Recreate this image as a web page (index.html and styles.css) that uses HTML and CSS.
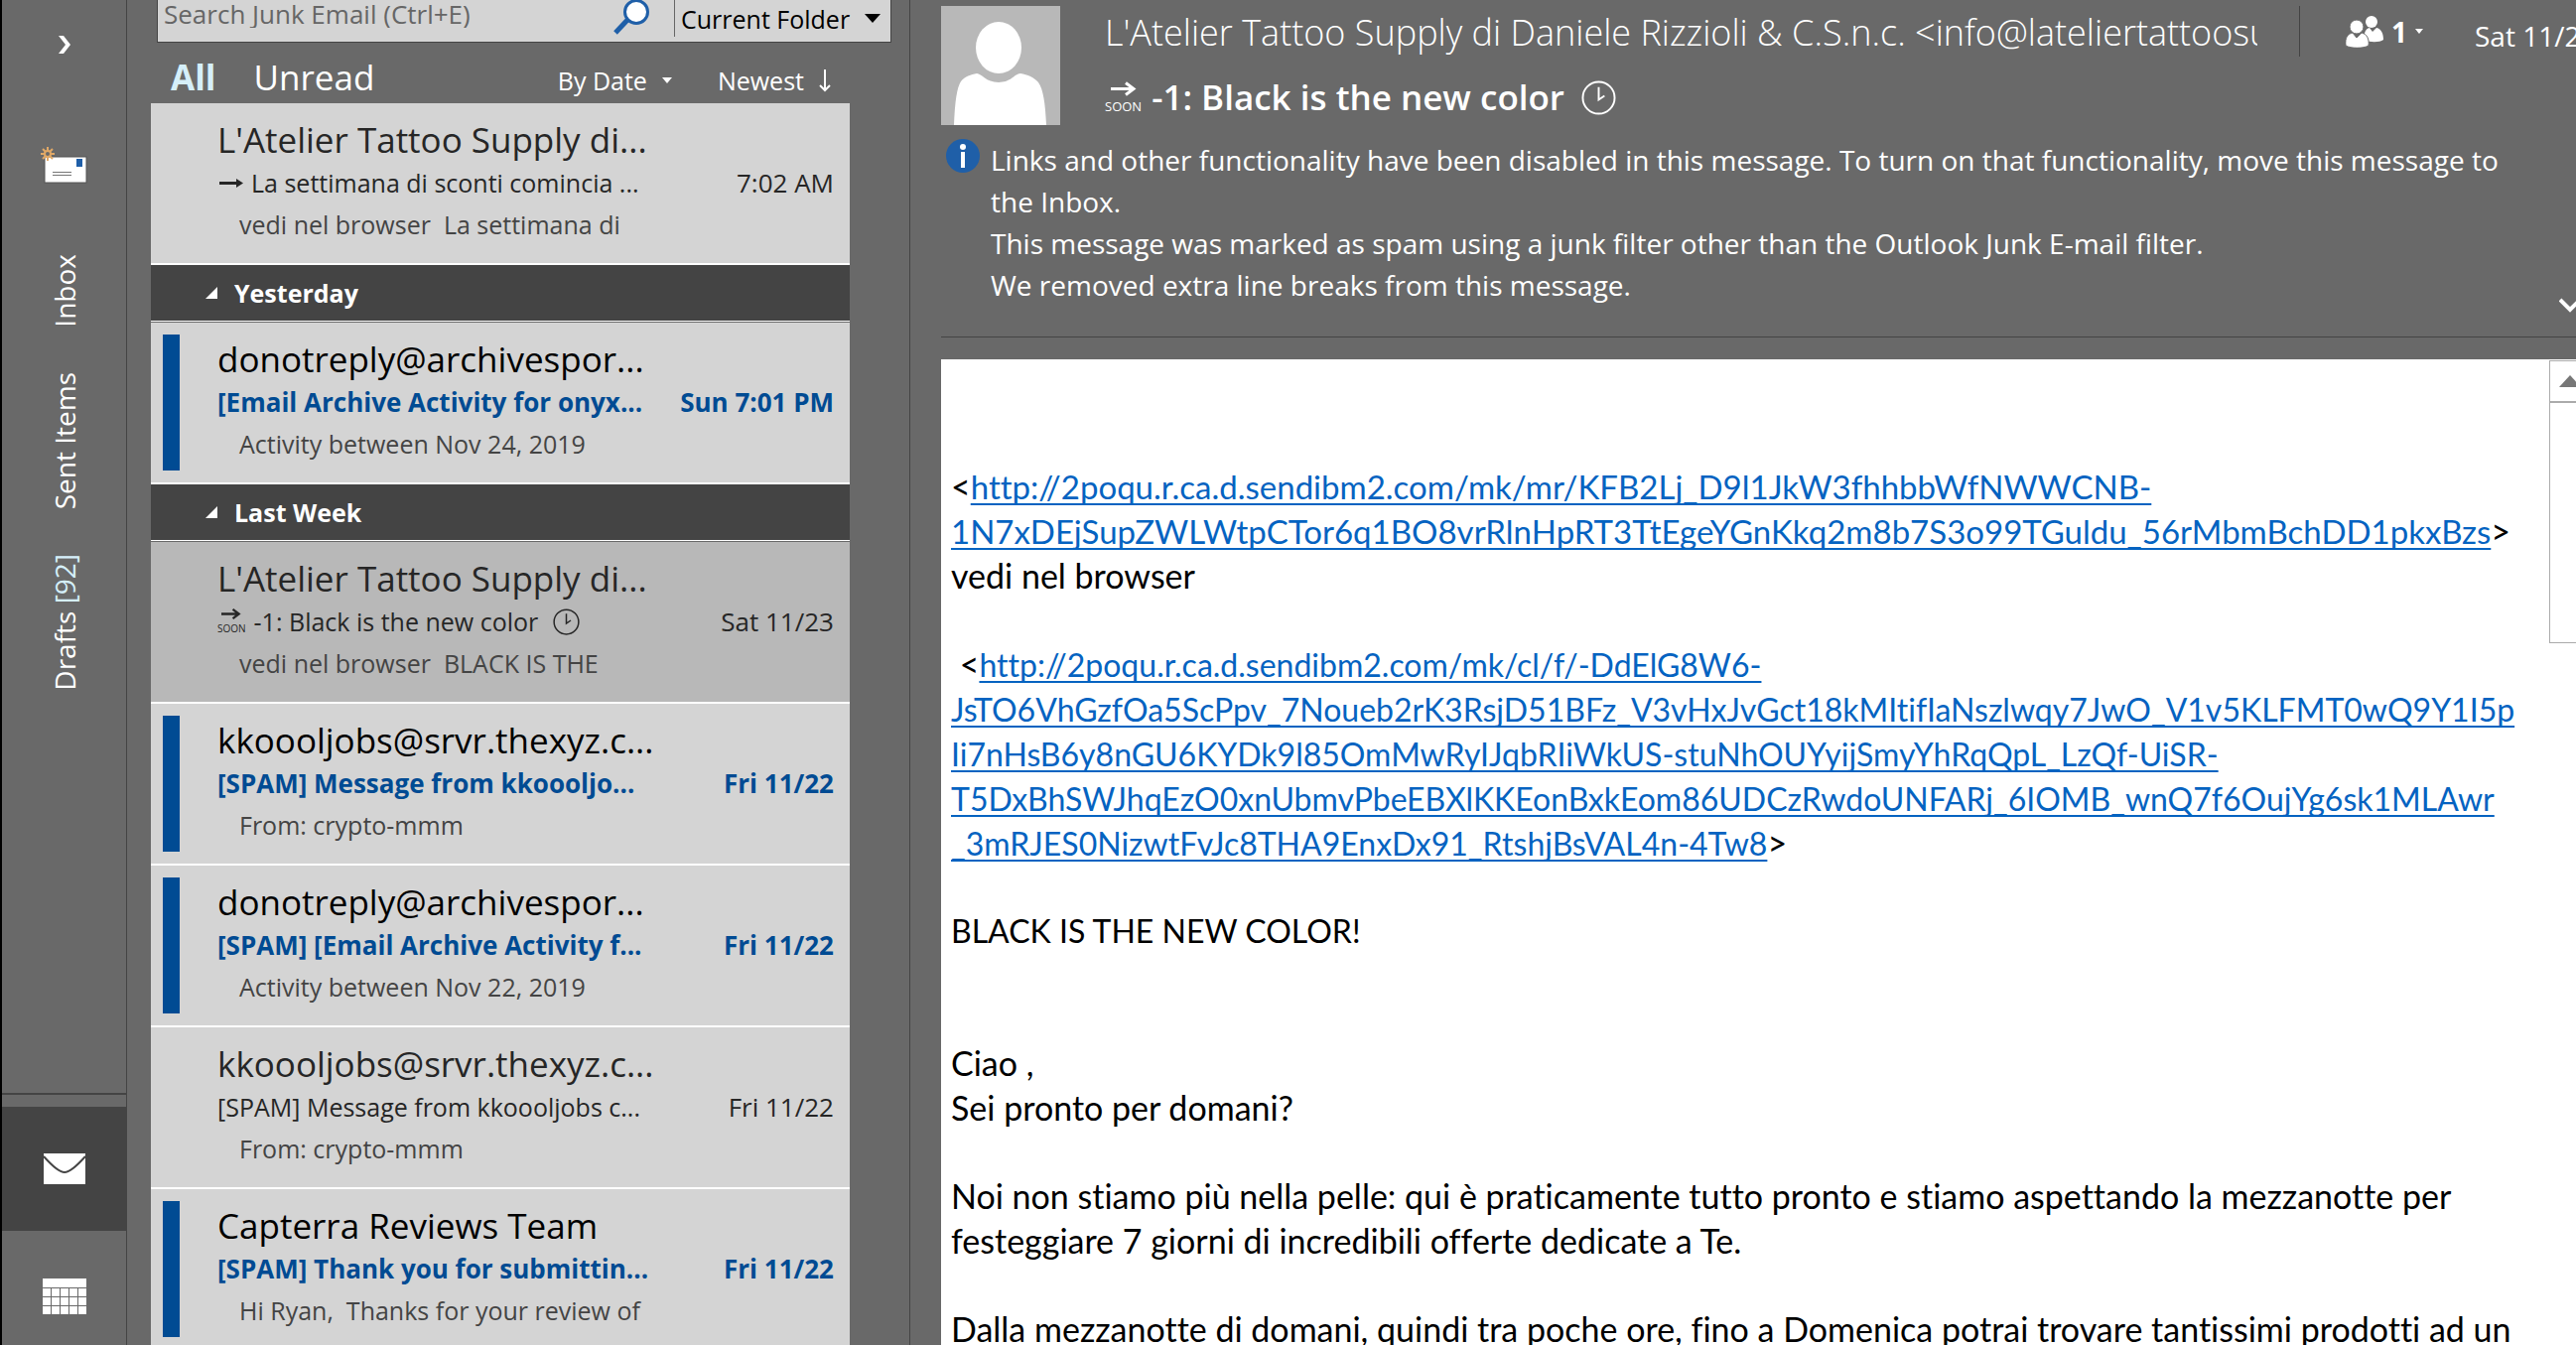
FILE: index.html
```html
<!DOCTYPE html>
<html lang="en">
<head>
<meta charset="utf-8">
<title>Junk Email - Mail</title>
<link rel="stylesheet" href="styles.css">
</head>
<body>
<svg width="0" height="0" class="defs" aria-hidden="true">
  <symbol id="clock" viewBox="0 0 36 36">
    <circle cx="18" cy="18" r="16.5" fill="none" stroke="currentColor" stroke-width="2"/>
    <path d="M18 7V20L24 16" fill="none" stroke="currentColor" stroke-width="2"/>
  </symbol>
  <symbol id="arrow" viewBox="0 0 26 14">
    <path d="M0 7H22M15 1L23 7L15 13" fill="none" stroke="currentColor" stroke-width="3"/>
  </symbol>
</svg>
<div class="app">
  <nav class="rail">
    <button class="rail-btn expand" aria-label="Expand folder pane">
      <svg width="14" height="18" viewBox="0 0 14 18"><path d="M1 0H6L13 9L6 18H1L8 9Z" fill="#fff"/></svg>
    </button>
    <button class="rail-btn compose" aria-label="New email">
      <svg width="48" height="38" viewBox="0 0 48 38">
        <rect x="4" y="11" width="42" height="26" fill="#fff" stroke="#555"/>
        <rect x="36" y="13" width="6" height="8" fill="#1f5fa8"/>
        <path d="M12 26.500H31M12 29.500H31" stroke="#777"/>
        <g stroke="#e0a866" stroke-width="2" fill="none"><circle cx="7" cy="8" r="3"/><path d="M7 1V5M7 11V15M0 8H4M10 8H14M2 3L5 6M9 10L12 13M12 3L9 6M5 10L2 13"/></g>
      </svg>
    </button>
    <div class="folders">
      <a href="#inbox">Inbox</a>
      <a href="#sent">Sent Items</a>
      <a href="#drafts">Drafts <span class="count">[92]</span></a>
    </div>
    <div class="modules">
      <button class="rail-btn mail" aria-label="Mail">
        <svg width="42" height="31" viewBox="0 0 42 31"><rect width="42" height="31" fill="#fff"/><path d="M0 3C8 12 15 19 21 19S34 12 42 3" fill="none" stroke="#444" stroke-width="2"/></svg>
      </button>
      <button class="rail-btn calendar" aria-label="Calendar">
        <svg width="44" height="36" viewBox="0 0 44 36"><rect width="44" height="36" fill="#fff"/><path d="M0 9.500H44M0 18.500H44M0 27.500H44M8.500 9V36M17.500 9V36M26.500 9V36M35.500 9V36" stroke="#696969"/></svg>
      </button>
    </div>
  </nav>

  <section class="list-pane">
    <form class="search">
      <input type="text" placeholder="Search Junk Email (Ctrl+E)" aria-label="Search Junk Email">
      <button type="button" aria-label="Search">
        <svg width="38" height="35" viewBox="0 0 38 35"><path d="M17 18L3 33" stroke="#1f5fa8" stroke-width="5"/><circle cx="24" cy="12" r="11.500" fill="#fff" stroke="#1f5fa8" stroke-width="3"/></svg>
      </button>
      <label class="scope">
        <select aria-label="Search scope"><option>Current Folder</option></select>
        <svg width="16" height="9" viewBox="0 0 16 9"><path d="M0 0H16L8 9Z"/></svg>
      </label>
    </form>
    <div class="filters">
      <button class="tab active">All</button>
      <button class="tab">Unread</button>
      <button class="sort by">By Date <svg width="10" height="6" viewBox="0 0 10 6"><path d="M0 0H10L5 6Z" fill="#fff"/></svg></button>
      <button class="sort">Newest <svg width="12" height="23" viewBox="0 0 12 23"><path d="M6 0V21M1 16L6 21L11 16" fill="none" stroke="#fff" stroke-width="2"/></svg></button>
    </div>

    <div class="messages">
      <a class="msg" href="#m1"><span class="flag"></span><span class="text">
        <span class="from">L'Atelier Tattoo Supply di...</span>
        <span class="row"><span class="subject"><svg class="dash" width="24" height="9" viewBox="0 0 24 9"><path d="M0 3H17V0L24 4.500L17 9V6H0Z" fill="currentColor"/></svg>La settimana di sconti comincia ...</span><time>7:02 AM</time></span>
        <span class="preview">vedi nel browser&nbsp; La settimana di</span></span></a>
      <h2><svg width="12" height="12" viewBox="0 0 12 12"><path d="M12 0V12H0Z" fill="#fff"/></svg>Yesterday</h2>
      <a class="msg unread" href="#m2"><span class="flag"></span><span class="text">
        <span class="from">donotreply@archivespor...</span>
        <span class="row"><span class="subject">[Email Archive Activity for onyx...</span><time>Sun 7:01 PM</time></span>
        <span class="preview">Activity between Nov 24, 2019</span></span></a>
      <h2><svg width="12" height="12" viewBox="0 0 12 12"><path d="M12 0V12H0Z" fill="#fff"/></svg>Last Week</h2>
      <a class="msg selected" href="#m3"><span class="flag"></span><span class="text">
        <span class="from">L'Atelier Tattoo Supply di...</span>
        <span class="row"><span class="subject"><span class="soon"><svg width="20" height="11"><use href="#arrow"/></svg>SOON</span>-1: Black is the new color<svg class="clock" width="27" height="27"><use href="#clock"/></svg></span><time>Sat 11/23</time></span>
        <span class="preview">vedi nel browser&nbsp; BLACK IS THE</span></span></a>
      <a class="msg unread" href="#m4"><span class="flag"></span><span class="text">
        <span class="from">kkoooljobs@srvr.thexyz.c...</span>
        <span class="row"><span class="subject">[SPAM] Message from kkoooljo...</span><time>Fri 11/22</time></span>
        <span class="preview">From: crypto-mmm</span></span></a>
      <a class="msg unread" href="#m5"><span class="flag"></span><span class="text">
        <span class="from">donotreply@archivespor...</span>
        <span class="row"><span class="subject">[SPAM] [Email Archive Activity f...</span><time>Fri 11/22</time></span>
        <span class="preview">Activity between Nov 22, 2019</span></span></a>
      <a class="msg" href="#m6"><span class="flag"></span><span class="text">
        <span class="from">kkoooljobs@srvr.thexyz.c...</span>
        <span class="row"><span class="subject">[SPAM] Message from kkoooljobs c...</span><time>Fri 11/22</time></span>
        <span class="preview">From: crypto-mmm</span></span></a>
      <a class="msg unread" href="#m7"><span class="flag"></span><span class="text">
        <span class="from">Capterra Reviews Team</span>
        <span class="row"><span class="subject">[SPAM] Thank you for submittin...</span><time>Fri 11/22</time></span>
        <span class="preview">Hi Ryan,&nbsp; Thanks for your review of</span></span></a>
    </div>
  </section>

  <main class="reader">
    <header class="reader-head">
      <svg class="avatar" width="120" height="120" viewBox="0 0 120 120"><rect width="120" height="120" fill="#b8b8b8"/><ellipse cx="58" cy="42" rx="23" ry="26" fill="#fff"/><path d="M13 120C14 96 16 82 20 76C24 71 30 69 36 68C41 68 45 77 58 77S74 68 80 68C87 69 94 72 98 77C103 84 105 98 106 120Z" fill="#fff"/></svg>
      <div class="titles">
        <div class="sender">L'Atelier Tattoo Supply di Daniele Rizzioli &amp; C.S.n.c. &lt;info@lateliertattoosu</div>
        <h1><span class="soon"><svg width="26" height="15"><use href="#arrow"/></svg>SOON</span>-1: Black is the new color<svg class="clock" width="35" height="35"><use href="#clock"/></svg></h1>
      </div>
      <div class="meta">
        <button class="people" aria-label="Recipients"><svg width="38" height="32" viewBox="0 0 38 32"><g fill="#fff"><ellipse cx="26" cy="6" rx="6" ry="6"/><path d="M19 24C18 17 20 13 24 12L27 16L31 12C36 13 38 18 38 24C34 27 24 27 19 24Z"/><ellipse cx="11" cy="11" rx="7" ry="7" stroke="#696969"/><path d="M0 30C-1 22 2 18 7 17L11 22L16 17C21 18 24 23 23 30C18 33 5 33 0 30Z" stroke="#696969"/></g></svg><b>1</b><svg width="8" height="5" viewBox="0 0 8 5"><path d="M0 0H8L4 5Z" fill="#fff"/></svg></button>
        <time>Sat 11/23</time>
      </div>
    </header>
    <div class="notice">
      <svg class="info" width="34" height="34" viewBox="0 0 34 34"><circle cx="17" cy="17" r="17" fill="#1f5fa8"/><circle cx="17" cy="8" r="3" fill="#fff"/><rect x="15" y="13" width="4" height="16" fill="#fff"/></svg>
      <div class="notice-text">
        <p>Links and other functionality have been disabled in this message. To turn on that functionality, move this message to the Inbox.</p>
        <p>This message was marked as spam using a junk filter other than the Outlook Junk E-mail filter.</p>
        <p>We removed extra line breaks from this message.</p>
      </div>
      <button class="more" aria-label="Expand header"><svg width="24" height="15" viewBox="0 0 24 15"><path d="M1 2L11 12L21 2" fill="none" stroke="#fff" stroke-width="4"/></svg></button>
    </div>
    <div class="body">
      <article>
        <p>&lt;<a href="#link1">http://2poqu.r.ca.d.sendibm2.com/mk/mr/KFB2Lj_D9l1JkW3fhhbbWfNWWCNB-<br>1N7xDEjSupZWLWtpCTor6q1BO8vrRlnHpRT3TtEgeYGnKkq2m8b7S3o99TGuldu_56rMbmBchDD1pkxBzs</a>&gt;<br>vedi nel browser</p>
        <p>&nbsp;&lt;<a class="long" href="#link2">http://2poqu.r.ca.d.sendibm2.com/mk/cl/f/-DdElG8W6-<br>JsTO6VhGzfOa5ScPpv_7Noueb2rK3RsjD51BFz_V3vHxJvGct18kMItifIaNszlwqy7JwO_V1v5KLFMT0wQ9Y1I5p<br>Ii7nHsB6y8nGU6KYDk9l85OmMwRyIJqbRIiWkUS-stuNhOUYyijSmyYhRqQpL_LzQf-UiSR-<br>T5DxBhSWJhqEzO0xnUbmvPbeEBXlKKEonBxkEom86UDCzRwdoUNFARj_6IOMB_wnQ7f6OujYg6sk1MLAwr<br>_3mRJES0NizwtFvJc8THA9EnxDx91_RtshjBsVAL4n-4Tw8</a>&gt;</p>
        <p class="headline">BLACK IS THE NEW COLOR!</p>
        <p>Ciao ,<br>Sei pronto per domani?</p>
        <p>Noi non stiamo più nella pelle: qui è praticamente tutto pronto e stiamo aspettando la mezzanotte per festeggiare 7 giorni di incredibili offerte dedicate a Te.</p>
        <p>Dalla mezzanotte di domani, quindi tra poche ore, fino a Domenica potrai trovare tantissimi prodotti ad un</p>
      </article>
      <div class="scroll" aria-hidden="true">
        <div class="up"><svg width="22" height="12" viewBox="0 0 22 12"><path d="M11 0L22 12H0Z" fill="#777"/></svg></div>
        <div class="thumb"></div>
      </div>
    </div>
  </main>
</div>
</body>
</html>
```
FILE: styles.css
```css
* { box-sizing: border-box; }
body { margin: 0; background: #696969; color: #fff; font: 25px/42px "Open Sans", "Noto Sans", sans-serif; }
button, input, select { font: inherit; color: inherit; background: none; border: 0; padding: 0; margin: 0; }
button { display: flex; align-items: center; }
h1, h2, p { margin: 0; }
a { color: inherit; text-decoration: none; }
svg { display: block; flex: none; }
.defs { position: absolute; }

.app { display: grid; grid-template-columns: 128px 789px minmax(0, 1fr); height: 100vh; overflow: hidden; }

/* folder rail */
.rail { display: flex; flex-direction: column; min-height: 0; border-left: 2px solid #000; border-right: 1px solid #444; }
.rail-btn { justify-content: center; flex: none; }
.expand { padding: 36px 0 0; }
.compose { margin-top: 93px; }
.folders { display: flex; flex-direction: column; gap: 45px; align-items: center; margin-top: 71px; font-size: 28px; }
.folders a { writing-mode: vertical-rl; transform: rotate(180deg); }
.count { color: #d5effa; }
.modules { margin-top: auto; border-top: 2px solid #444; padding-top: 12px; }
.modules .rail-btn { width: 100%; }
.mail { background: #444; padding: 47px 0; }
.calendar { padding: 48px 0 31px; }

/* message list */
.list-pane { padding-left: 24px; border-right: 1px solid #444; min-height: 0; overflow: hidden; }
.search { display: flex; height: 43px; margin: 0 18px 0 6px; background: #d4d4d4; border: 1px solid #444; border-top: 0; }
.search input { flex: 1; min-width: 0; height: 28px; padding-left: 6px; color: #666; font-size: 26px; }
.search input::placeholder { color: #666; opacity: 1; }
.search button { height: 35px; margin-right: 24px; }
.scope { display: flex; align-items: center; gap: 14px; height: 37px; padding: 0 10px 0 6px; border-left: 1px solid #666; color: #000; }
.scope select { appearance: none; height: 34px; line-height: 28px; }
.filters { display: flex; align-items: baseline; height: 61px; padding: 0 79px 0 20px; line-height: 70px; }
.tab { font-size: 35px; margin-right: 38px; }
.active { color: #d5effa; font-weight: 700; }
.sort { gap: 15px; }
.by { margin: 0 46px 0 auto; }
.messages { margin-right: 60px; }
.messages h2 { display: flex; align-items: center; gap: 17px; height: 57px; margin-bottom: 1px; padding-left: 55px; background: #444; border-bottom: 1px solid #fff; font-size: 25px; font-weight: 700; }
.msg { display: flex; height: 163px; padding: 12px 16px 12px 12px; background: #d4d4d4; border-bottom: 2px solid #fff; color: #262626; }
.selected { background: #b8b8b8; }
.flag { width: 17px; flex: none; }
.unread .flag { background: #004b93; }
.text { display: flex; flex: 1; flex-direction: column; min-width: 0; padding: 3px 0 0 38px; white-space: nowrap; }
.from { font-size: 35px; line-height: 44px; }
.unread .from { color: #000; }
.row { display: flex; justify-content: space-between; }
.row time { font-size: 26px; }
.subject { display: flex; align-items: center; }
.unread .row { color: #004b93; font-size: 26px; font-weight: 700; }
.preview { padding-left: 22px; color: #444; }
.dash { margin: 0 8px 0 2px; }
.soon { display: flex; flex: none; flex-direction: column; align-items: center; gap: 3px; margin-right: 8px; font-size: 10px; line-height: 12px; font-weight: 400; }
.subject .clock { margin-left: 15px; }

/* reading pane */
.reader { display: flex; flex-direction: column; min-height: 0; padding-left: 31px; }
.reader-head { display: flex; height: 136px; flex: none; padding-top: 6px; }
.titles { flex: 1; min-width: 0; padding-left: 45px; }
.sender { overflow: hidden; white-space: nowrap; font-size: 36px; line-height: 54px; font-weight: 300; }
h1 { display: flex; align-items: center; font-size: 35px; line-height: 76px; font-weight: 600; }
h1 .soon { margin-right: 10px; font-size: 13px; line-height: 14px; }
h1 .clock { margin-left: 17px; }
.meta { display: flex; align-items: center; width: 279px; height: 51px; flex: none; margin-left: 42px; padding-left: 46px; border-left: 1px solid #444; overflow: hidden; white-space: nowrap; }
.people b { margin: 0 8px; font-size: 28px; }
.meta time { margin-left: 52px; padding-top: 8px; font-size: 28px; }
.notice { display: flex; flex: none; margin-top: 4px; padding: 0 0 22px 5px; border-bottom: 1px solid #444; font-size: 28px; }
.notice-text { flex: 1; padding: 0 30px 9px 11px; }
.more { align-self: flex-end; width: 17px; height: 15px; margin-bottom: 2px; overflow: hidden; justify-content: flex-start; }
.body { display: flex; flex: 1; min-height: 0; margin-top: 22px; background: #fff; color: #000; }
article { flex: 1; min-width: 0; padding: 105px 0 0 10px; font: 34px/45px Lato, "Open Sans", sans-serif; font-variant-ligatures: none; }
article p { margin-bottom: 44px; }
article .headline { margin-bottom: 88px; font-size: 32px; }
article a { color: #0563c1; font-size: 33px; line-height: 40px; text-decoration: underline 2px; text-underline-offset: 4px; text-decoration-skip-ink: none; white-space: nowrap; }
article .long { font-size: 32px; }
.scroll { width: 27px; flex: none; margin-top: 1px; }
.up { height: 43px; padding: 14px 0 0 9px; overflow: hidden; border: 1px solid #ababab; border-width: 1px 0 2px 1px; }
.thumb { height: 242px; border: 1px solid #ababab; border-width: 0 0 1px 1px; }
```
